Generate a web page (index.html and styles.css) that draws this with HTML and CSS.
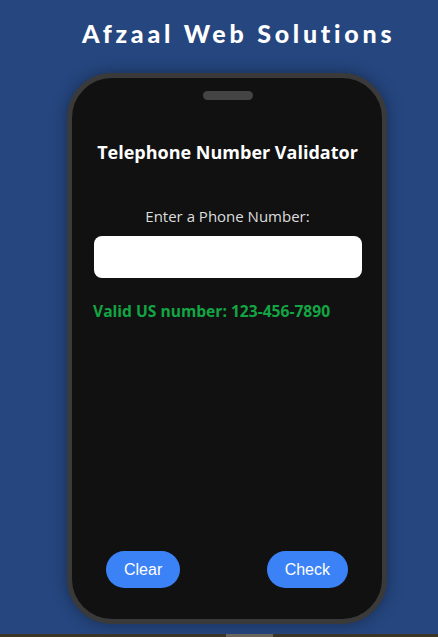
FILE: index.html
```html
<!DOCTYPE html>
<html>
<head>
<meta charset="utf-8">
<link rel="stylesheet" href="styles.css">
</head>
<body>
<div class="page">
  <h1 class="brand">Afzaal Web Solutions</h1>
  <div class="phone">
    <div class="notch"></div>
    <h2 class="title">Telephone Number Validator</h2>
    <label class="label" for="num">Enter a Phone Number:</label>
    <input class="input" id="num" type="text">
    <p class="result">Valid US number: 123-456-7890</p>
    <div class="spacer"></div>
    <div class="actions">
      <button class="btn">Clear</button>
      <button class="btn">Check</button>
    </div>
  </div>
</div>
<div class="scrollbar"><div class="thumb"></div></div>
</body>
</html>
```
FILE: styles.css
```css
html, body {
  margin: 0;
  padding: 0;
}
body {
  width: 438px;
  height: 637px;
  background: #25467f;
  overflow: hidden;
  display: flex;
  flex-direction: column;
}
.page {
  flex: 1;
  display: flex;
  flex-direction: column;
  align-items: flex-start;
}
.brand {
  margin: 18px 0 0 82px;
  font-family: "Lato", "DejaVu Sans", sans-serif;
  font-weight: 900;
  font-size: 25px;
  line-height: 30px;
  letter-spacing: 3.75px;
  color: #ffffff;
  white-space: nowrap;
}
.phone {
  margin: 25px 0 0 67px;
  border: 5px solid #3a3a3a;
  border-radius: 45px;
  background: #111111;
  box-shadow: 0 0 16px rgba(0, 0, 0, 0.35);
  display: flex;
  flex-direction: column;
  align-items: center;
  padding: 13px 20px 31px 21px;
  box-sizing: content-box;
  width: 269px;
  height: 497px;
}
.notch {
  width: 50px;
  height: 9px;
  border-radius: 5px;
  background: #444444;
}
.title {
  margin: 40px 0 0 0;
  font-family: "Open Sans", "Noto Sans", sans-serif;
  font-weight: 700;
  font-size: 18px;
  line-height: 24px;
  color: #ffffff;
  white-space: nowrap;
}
.label {
  margin-top: 42px;
  font-family: "Open Sans", "Noto Sans", sans-serif;
  font-size: 15px;
  line-height: 20px;
  color: #dddddd;
}
.input {
  margin-top: 10px;
  width: 268px;
  height: 42px;
  box-sizing: border-box;
  border: none;
  border-radius: 8px;
  background: #ffffff;
  outline: none;
}
.result {
  align-self: stretch;
  margin: 21px 0 0 0;
  font-family: "Open Sans", "Noto Sans", sans-serif;
  font-weight: 700;
  font-size: 15.6px;
  line-height: 24px;
  color: #13a543;
  white-space: nowrap;
}
.spacer {
  flex: 1;
}
.actions {
  align-self: stretch;
  display: flex;
  justify-content: space-between;
  padding: 0 14px 0 13px;
}
.btn {
  height: 37px;
  padding: 0 18px;
  border: none;
  border-radius: 19px;
  background: #3b82f6;
  color: #ffffff;
  font-family: "Liberation Sans", Arial, sans-serif;
  font-size: 16px;
}
.scrollbar {
  height: 3px;
  background: #3d3428;
}
.thumb {
  margin-left: 226px;
  width: 47px;
  height: 3px;
  background: #6b665c;
}
```
